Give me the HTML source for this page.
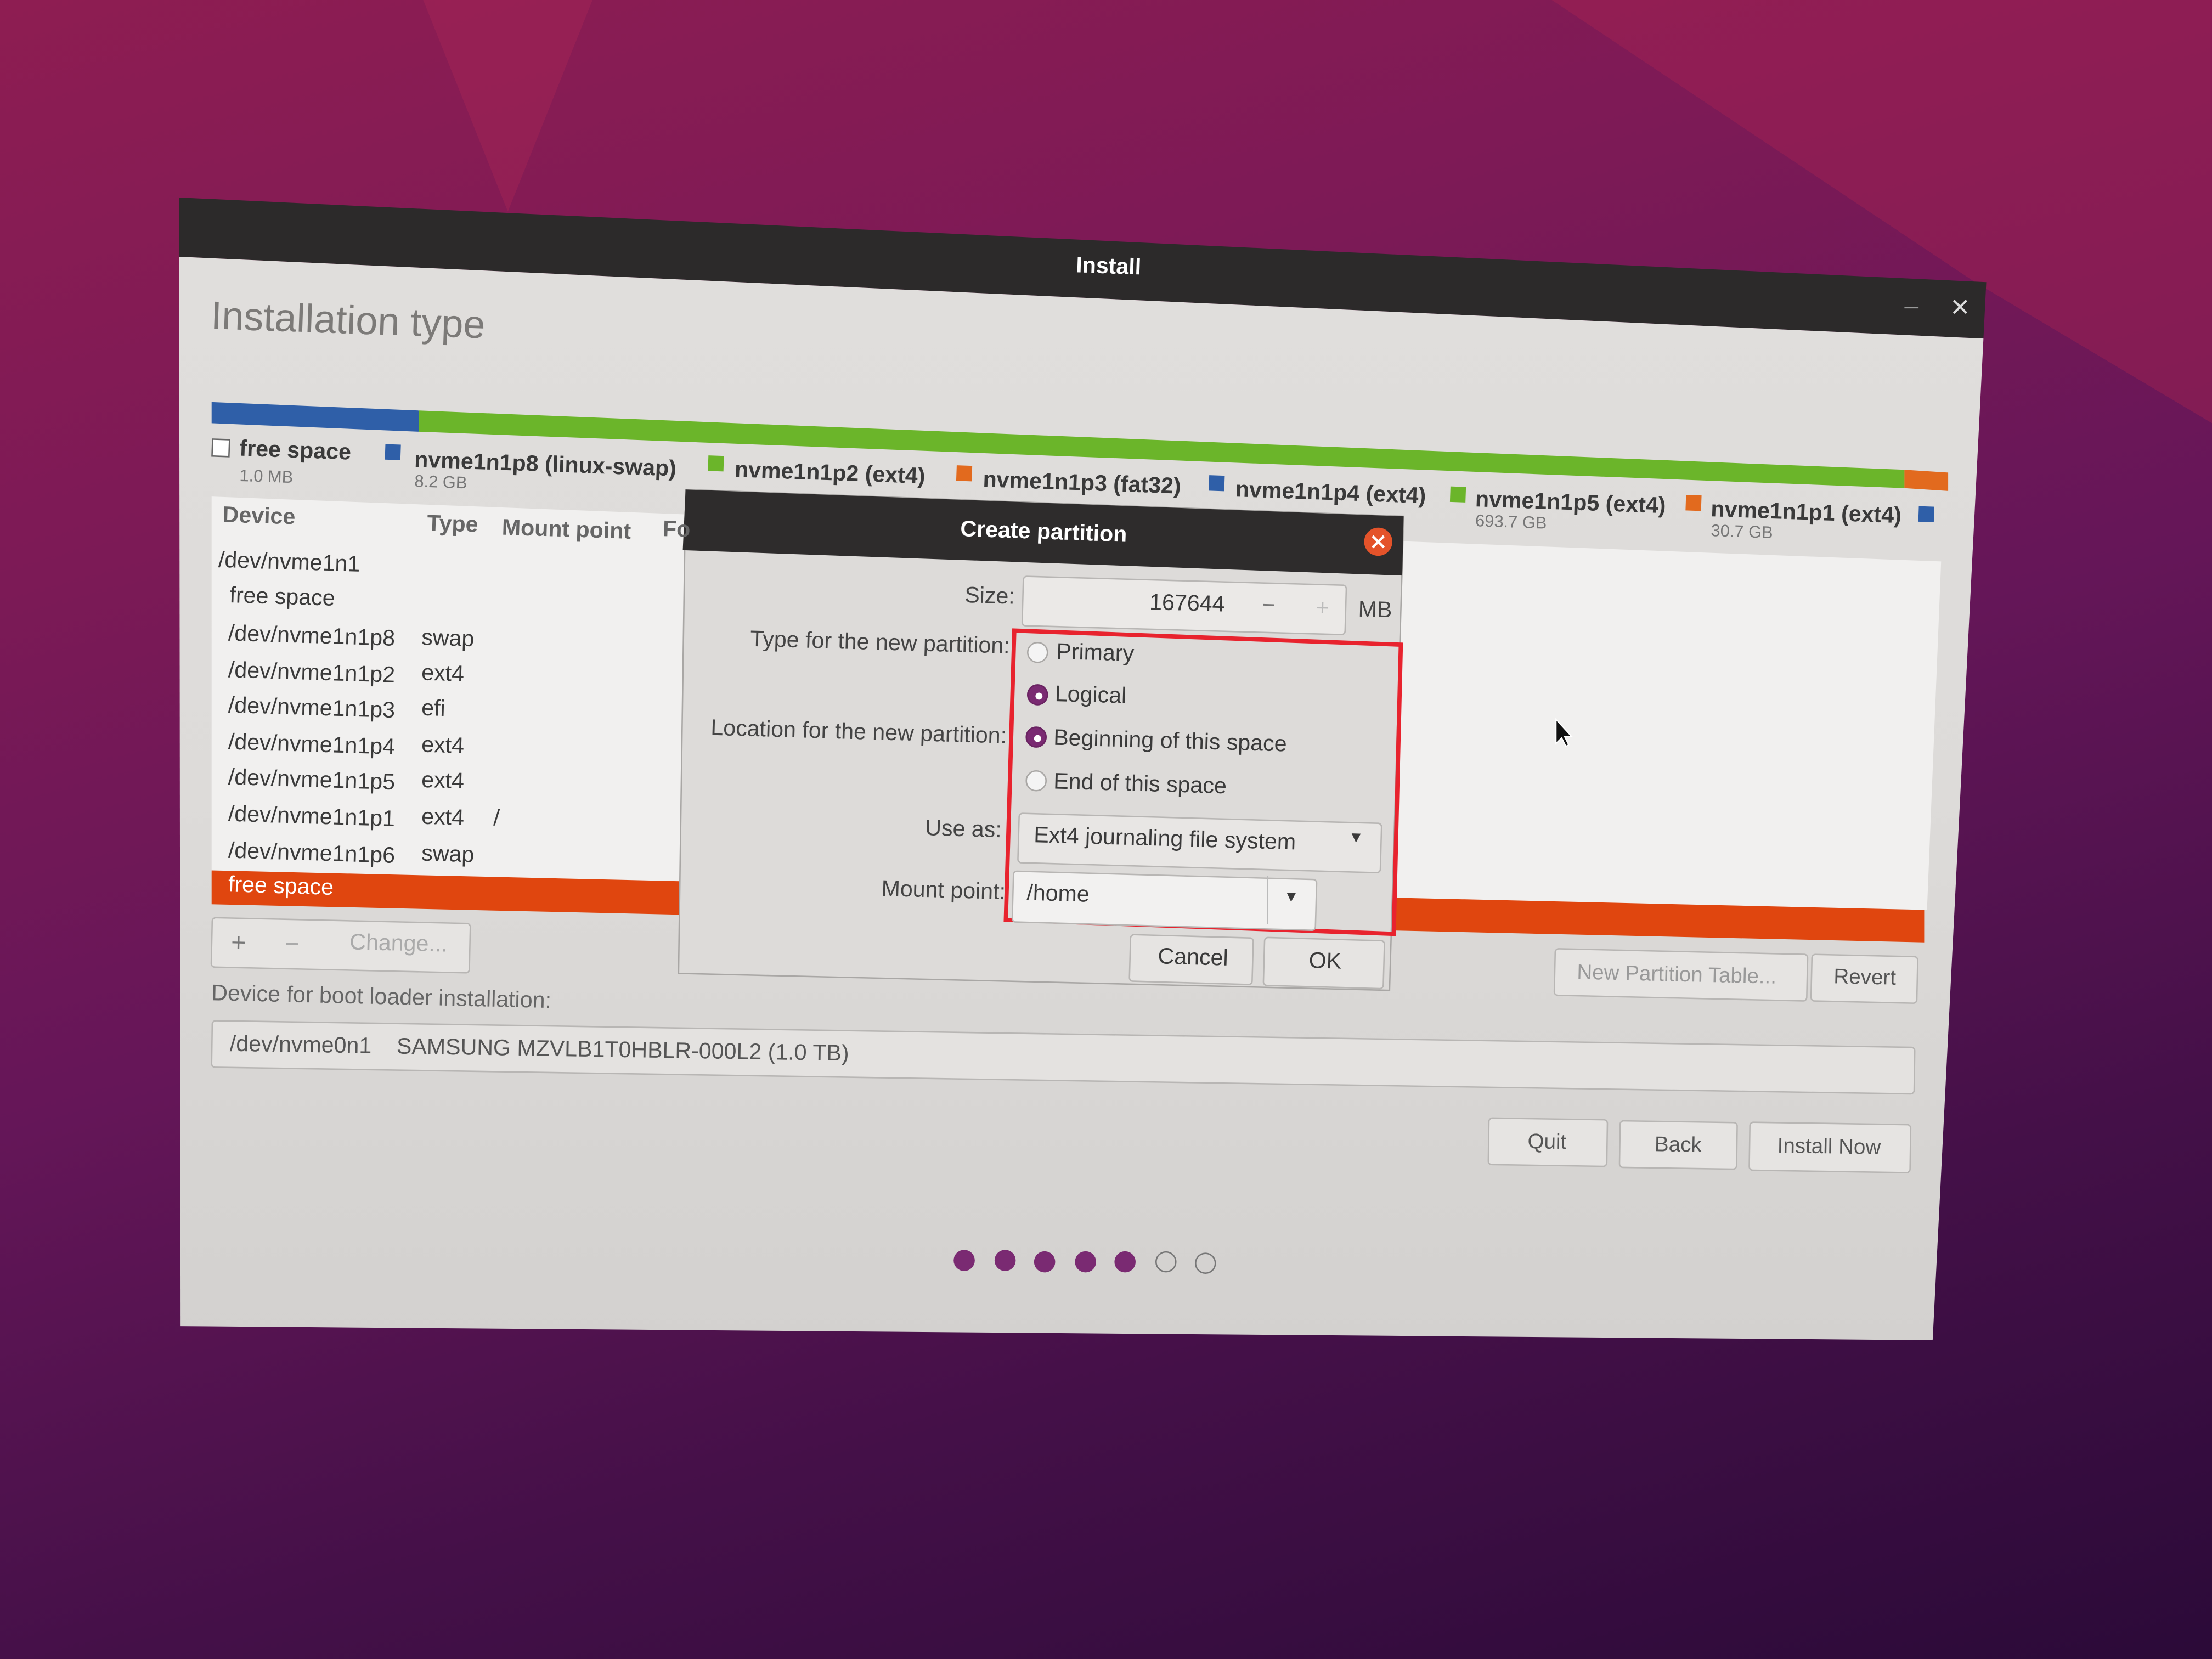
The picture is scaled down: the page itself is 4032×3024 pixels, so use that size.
<!DOCTYPE html>
<html><head><meta charset="utf-8"><style>
html,body{margin:0;padding:0;width:4032px;height:3024px;overflow:hidden;background:#3a0f45}
#w{position:absolute;left:0;top:0;width:1568px;height:1176px;transform:scale(2.5714);transform-origin:0 0;
background:linear-gradient(165deg,#8e1d52 0%,#7d1a56 25%,#651658 50%,#441048 75%,#2b0a38 100%);overflow:hidden}
.t{position:absolute;transform-origin:0 0;transform:rotate(2deg);white-space:nowrap;font-family:"Liberation Sans",sans-serif;font-size:16px;color:#3a3a3a;line-height:1}
.b{position:absolute;transform-origin:0 0;transform:rotate(2deg);box-sizing:border-box;border:1px solid #b8b6b4;border-radius:3px;background:#e6e4e2}
.sq{position:absolute;width:11px;height:11px;transform:rotate(2deg)}
.rad{position:absolute;width:15px;height:15px;border-radius:50%;box-sizing:border-box;border:1px solid #a9a7a5;background:#f4f4f4}
.rad.on{background:#7a2a72;border-color:#6a2362}
.rad.on::after{content:"";position:absolute;left:4.5px;top:4.5px;width:5px;height:5px;border-radius:50%;background:#fff}
.dot{position:absolute;width:15px;height:15px;border-radius:50%;box-sizing:border-box}
.l{transform:rotate(1.8deg)}
.d{transform:rotate(1.6deg)}
.m{transform:rotate(1.3deg)}
.lo{transform:rotate(0.9deg)}
</style></head><body><div id="w">
<svg width="1568" height="1176" style="position:absolute;left:0;top:0">
<defs><linearGradient id="cg" x1="0" y1="0" x2="0" y2="1"><stop offset="0" stop-color="#e0dedc"/><stop offset="0.5" stop-color="#dddbd9"/><stop offset="1" stop-color="#d3d1cf"/></linearGradient></defs>
<polygon points="300,0 420,0 360,150" fill="#b52a57" opacity="0.3"/>
<polygon points="1100,0 1568,0 1568,300 1400,200" fill="#b32650" opacity="0.35"/>
<polygon points="127,140 1408,200 1406,240 127,182" fill="#2c2a2a"/>
<polygon points="127,182 1406,240 1370,950 128,940" fill="url(#cg)"/>
<polygon points="150,285 297,291 297,306 150,300" fill="#2f5fa8"/>
<polygon points="297,291 1350,333 1350,346 297,306" fill="#6bb52a"/>
<polygon points="1350,333 1381,335 1381,348 1350,346" fill="#e26a1e"/>
<polygon points="150,352 1376,398 1366,645 150,618" fill="#f1f0ef"/>
<polygon points="150,617 1364,645 1364,668 150,641" fill="#e0460f"/>
<polygon points="486,347 995,366 985,702 481,690" fill="#dddbd9" stroke="#a9a7a5"/>
<polygon points="486,347 995,366 994,408 484,390" fill="#2e2c2c"/>
<polygon points="719,447 993,457 988,662 713,652" fill="none" stroke="#e8232e" stroke-width="3"/>
<circle cx="977" cy="384" r="10" fill="#e4532a"/>
<path d="M973,380 l8,8 M981,380 l-8,8" stroke="#fff" stroke-width="1.8"/>
<path d="M1385,213 l9,9 M1394,213 l-9,9" stroke="#ddd" stroke-width="1.6"/>
<path d="M1350,218 h10" stroke="#999" stroke-width="1.2"/>
<path d="M1336,756 l9,0 l-4.5,5 z" fill="#555"/>
<path d="M1103,510 l0,17 l4,-4 l3,6 l2,-1 l-3,-6 l5,0 z" fill="#111" stroke="#fff" stroke-width="0.8"/>
</svg>
<div class="t" style="left:763px;top:181px;color:#fff;font-weight:bold">Install</div>
<div class="t" style="left:150px;top:210px;font-size:28px;color:#7c7a78">Installation type</div>
<div class="sq" style="left:150px;top:311px;border:1px solid #666;background:#fff"></div>
<div class="t" style="left:170px;top:311px;font-weight:bold">free space</div>
<div class="t" style="left:170px;top:331px;font-size:12px;color:#777">1.0 MB</div>
<div class="sq" style="left:273px;top:315px;background:#2f5fa8"></div>
<div class="t" style="left:294px;top:319px;font-weight:bold">nvme1n1p8 (linux-swap)</div>
<div class="t" style="left:294px;top:335px;font-size:12px;color:#777">8.2 GB</div>
<div class="sq" style="left:502px;top:323px;background:#6bb52a"></div>
<div class="t" style="left:521px;top:326px;font-weight:bold">nvme1n1p2 (ext4)</div>
<div class="sq" style="left:678px;top:330px;background:#e26a1e"></div>
<div class="t" style="left:697px;top:333px;font-weight:bold">nvme1n1p3 (fat32)</div>
<div class="sq" style="left:857px;top:337px;background:#2f5fa8"></div>
<div class="t" style="left:876px;top:340px;font-weight:bold">nvme1n1p4 (ext4)</div>
<div class="sq" style="left:1028px;top:345px;background:#6bb52a"></div>
<div class="t" style="left:1046px;top:347px;font-weight:bold">nvme1n1p5 (ext4)</div>
<div class="t" style="left:1046px;top:363px;font-size:12px;color:#777">693.7 GB</div>
<div class="sq" style="left:1195px;top:351px;background:#e26a1e"></div>
<div class="t" style="left:1213px;top:354px;font-weight:bold">nvme1n1p1 (ext4)</div>
<div class="t" style="left:1213px;top:370px;font-size:12px;color:#777">30.7 GB</div>
<div class="sq" style="left:1360px;top:359px;background:#2f5fa8"></div>
<div class="t l" style="left:158px;top:358px;color:#666;font-weight:bold">Device</div>
<div class="t l" style="left:303px;top:364px;color:#666;font-weight:bold">Type</div>
<div class="t l" style="left:356px;top:367px;color:#666;font-weight:bold">Mount point</div>
<div class="t l" style="left:470px;top:368px;color:#666;font-weight:bold">Fo</div>
<div class="t l" style="left:155px;top:390px">/dev/nvme1n1</div>
<div class="t l" style="left:163px;top:415px">free space</div>
<div class="t l" style="left:162px;top:442px">/dev/nvme1n1p8</div><div class="t l" style="left:299px;top:445px">swap</div>
<div class="t l" style="left:162px;top:468px">/dev/nvme1n1p2</div><div class="t l" style="left:299px;top:470px">ext4</div>
<div class="t l" style="left:162px;top:493px">/dev/nvme1n1p3</div><div class="t l" style="left:299px;top:495px">efi</div>
<div class="t l" style="left:162px;top:519px">/dev/nvme1n1p4</div><div class="t l" style="left:299px;top:521px">ext4</div>
<div class="t l" style="left:162px;top:544px">/dev/nvme1n1p5</div><div class="t l" style="left:299px;top:546px">ext4</div>
<div class="t l" style="left:162px;top:570px">/dev/nvme1n1p1</div><div class="t l" style="left:299px;top:572px">ext4</div><div class="t l" style="left:350px;top:573px">/</div>
<div class="t l" style="left:162px;top:596px">/dev/nvme1n1p6</div><div class="t l" style="left:299px;top:598px">swap</div>
<div class="t l" style="left:162px;top:620px;color:#fff">free space</div>
<div class="b m" style="left:150px;top:650px;width:184px;height:36px"></div>
<div class="t m" style="left:164px;top:659px;font-size:18px;color:#777">+</div>
<div class="t m" style="left:202px;top:660px;font-size:18px;color:#aaa">−</div>
<div class="t m" style="left:248px;top:661px;color:#aaa">Change...</div>
<div class="t m" style="left:150px;top:697px;color:#666">Device for boot loader installation:</div>
<div class="b lo" style="left:150px;top:723px;width:1208px;height:34px;background:#e4e2e0"></div>
<div class="t lo" style="left:163px;top:733px;color:#555">/dev/nvme0n1&nbsp;&nbsp;&nbsp;&nbsp;SAMSUNG MZVLB1T0HBLR-000L2 (1.0 TB)</div>
<div class="b m" style="left:1102px;top:672px;width:180px;height:34px"></div>
<div class="t m" style="left:1118px;top:682px;color:#999;font-size:15px">New Partition Table...</div>
<div class="b m" style="left:1284px;top:676px;width:76px;height:34px"></div>
<div class="t m" style="left:1300px;top:685px;color:#555;font-size:15px">Revert</div>
<div class="b lo" style="left:1055px;top:792px;width:85px;height:34px"></div>
<div class="t lo" style="left:1083px;top:802px;color:#555;font-size:15px">Quit</div>
<div class="b lo" style="left:1148px;top:794px;width:84px;height:34px"></div>
<div class="t lo" style="left:1173px;top:804px;color:#555;font-size:15px">Back</div>
<div class="b lo" style="left:1240px;top:795px;width:115px;height:35px"></div>
<div class="t lo" style="left:1260px;top:805px;color:#555;font-size:15px">Install Now</div>
<div class="dot" style="left:676px;top:886px;background:#7a2a72"></div>
<div class="dot" style="left:705px;top:886px;background:#7a2a72"></div>
<div class="dot" style="left:733px;top:887px;background:#7a2a72"></div>
<div class="dot" style="left:762px;top:887px;background:#7a2a72"></div>
<div class="dot" style="left:790px;top:887px;background:#7a2a72"></div>
<div class="dot" style="left:819px;top:887px;border:1.5px solid #777"></div>
<div class="dot" style="left:847px;top:888px;border:1.5px solid #777"></div>
<!-- dialog -->
<div class="t" style="left:681px;top:368px;color:#fff;font-weight:bold">Create partition</div>
<div class="t d" style="left:684px;top:415px;color:#444">Size:</div>
<div class="b d" style="left:725px;top:408px;width:230px;height:36px;background:#ebe9e7"></div>
<div class="t d" style="left:815px;top:420px">167644</div>
<div class="t d" style="left:895px;top:422px;color:#777">−</div>
<div class="t d" style="left:933px;top:424px;color:#bbb">+</div>
<div class="t d" style="left:963px;top:425px;color:#444">MB</div>
<div class="t d" style="left:532px;top:446px;color:#444">Type for the new partition:</div>
<div class="rad" style="left:728px;top:455px"></div><div class="t d" style="left:749px;top:455px">Primary</div>
<div class="rad on" style="left:728px;top:485px"></div><div class="t d" style="left:748px;top:485px">Logical</div>
<div class="t d" style="left:504px;top:509px;color:#444">Location for the new partition:</div>
<div class="rad on" style="left:727px;top:515px"></div><div class="t d" style="left:747px;top:516px">Beginning of this space</div>
<div class="rad" style="left:727px;top:546px"></div><div class="t d" style="left:747px;top:547px">End of this space</div>
<div class="t d" style="left:656px;top:580px;color:#444">Use as:</div>
<div class="b d" style="left:722px;top:576px;width:258px;height:36px;background:#e8e6e4"></div>
<div class="t d" style="left:733px;top:585px">Ext4 journaling file system</div>
<div class="t d" style="left:956px;top:589px;font-size:11px">▼</div>
<div class="t d" style="left:625px;top:623px;color:#444">Mount point:</div>
<div class="b d" style="left:718px;top:617px;width:216px;height:37px;background:#f2f1f0"></div>
<div class="t d" style="left:728px;top:626px">/home</div>
<div style="position:absolute;left:898px;top:621px;width:1px;height:34px;background:#bbb"></div>
<div class="t d" style="left:910px;top:631px;font-size:11px">▼</div>
<div class="b d" style="left:801px;top:662px;width:88px;height:34px"></div>
<div class="t d" style="left:821px;top:671px">Cancel</div>
<div class="b d" style="left:896px;top:664px;width:86px;height:35px"></div>
<div class="t d" style="left:928px;top:674px">OK</div>
</div></body></html>
